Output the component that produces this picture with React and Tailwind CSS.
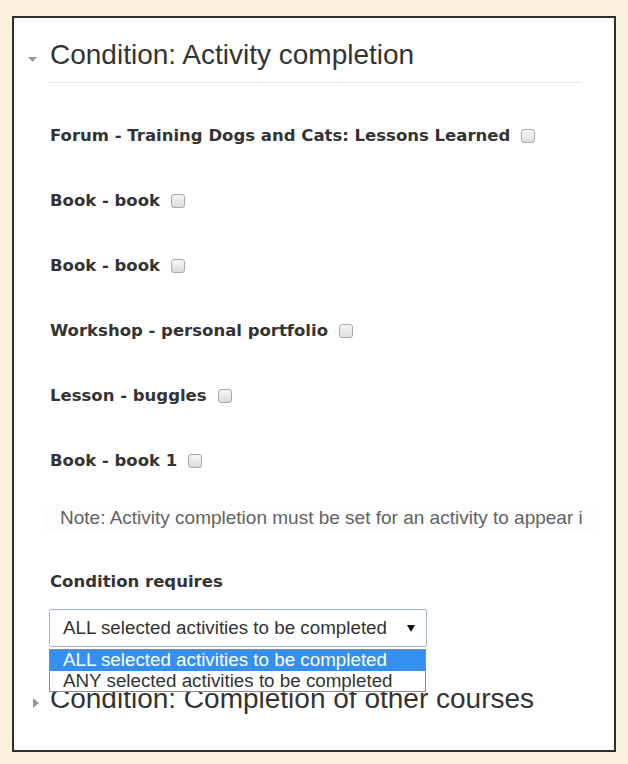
const items = [
  'Forum - Training Dogs and Cats: Lessons Learned',
  'Book - book',
  'Book - book',
  'Workshop - personal portfolio',
  'Lesson - buggles',
  'Book - book 1',
];

const Checkbox = () => (
  <span className="inline-block w-[14px] h-[14px] rounded-[3px] border border-[#a8a8a8] bg-gradient-to-b from-[#f6f6f6] to-[#dcdcdc] shrink-0" />
);

const App = () => {
  return (
    <div className="w-[628px] h-[764px] bg-[#fbf0dc] pt-[16px] pl-[12px] font-['Liberation_Sans',Arial,sans-serif]">
      <div className="w-[604px] h-[736px] bg-white border-2 border-[#2e2e2e] pl-[14px] pt-[21px] flex flex-col">
        {/* Activity completion */}
        <div className="flex items-center h-[32px]">
          <svg width="22" height="32" viewBox="0 0 22 32" className="shrink-0">
            <polygon points="0,18 9,18 4.5,23" fill="#9a9a9a" />
          </svg>
          <span className="text-[28px] leading-[32px] text-[#333]">Condition: Activity completion</span>
        </div>
        <div className="ml-[20px] w-[534px] h-px bg-[#e6e6e6] mt-[11px]" />

        <div className="pl-[22px] flex flex-col gap-[45px] mt-[43px] font-['DejaVu_Sans',Verdana,sans-serif] font-bold text-[16.5px] leading-[20px] text-[#333]">
          {items.map((label, i) => (
            <div key={i} className="flex items-center gap-[11px]">
              <span>{label}</span>
              <Checkbox />
            </div>
          ))}
        </div>

        <div className="ml-[17px] w-[553px] mt-[34px] py-[2px] px-[15px] bg-[#fdfdfd]">
          <div className="overflow-hidden whitespace-nowrap text-[19px] leading-[22px] text-[#626262]">
            Note: Activity completion must be set for an activity to appear in the list above.
          </div>
        </div>

        <div className="pl-[22px] mt-[41px] font-['DejaVu_Sans',Verdana,sans-serif] font-bold text-[16.5px] leading-[20px] text-[#333]">
          Condition requires
        </div>

        <div className="pl-[21px] mt-[17px] relative">
          <div className="w-[378px] h-[38px] border border-[#a9b9cc] rounded-[2px] flex items-center justify-between pl-[13px] pr-[11px] bg-white">
            <span className="text-[18.8px] leading-[22px] text-[#333]">ALL selected activities to be completed</span>
            <svg width="8" height="7" viewBox="0 0 8 7">
              <polygon points="0,0 8,0 4,7" fill="#111" />
            </svg>
          </div>
          <div className="absolute left-[21px] top-[40px] w-[377px] border border-[#8a8a8a] bg-white z-10 text-[18.8px] leading-[20px]">
            <div className="bg-[#3390f0] text-white pl-[13px] h-[21px]">ALL selected activities to be completed</div>
            <div className="text-[#333] pl-[13px] h-[20px]">ANY selected activities to be completed</div>
          </div>
        </div>

        {/* Completion of other courses */}
        <div className="flex items-center h-[32px] mt-[36px]">
          <svg width="22" height="32" viewBox="0 0 22 32" className="shrink-0">
            <polygon points="5,15 11,20 5,25" fill="#9a9a9a" />
          </svg>
          <span className="text-[28px] leading-[32px] text-[#333]">Condition: Completion of other courses</span>
        </div>
      </div>
    </div>
  );
};

export default App;
